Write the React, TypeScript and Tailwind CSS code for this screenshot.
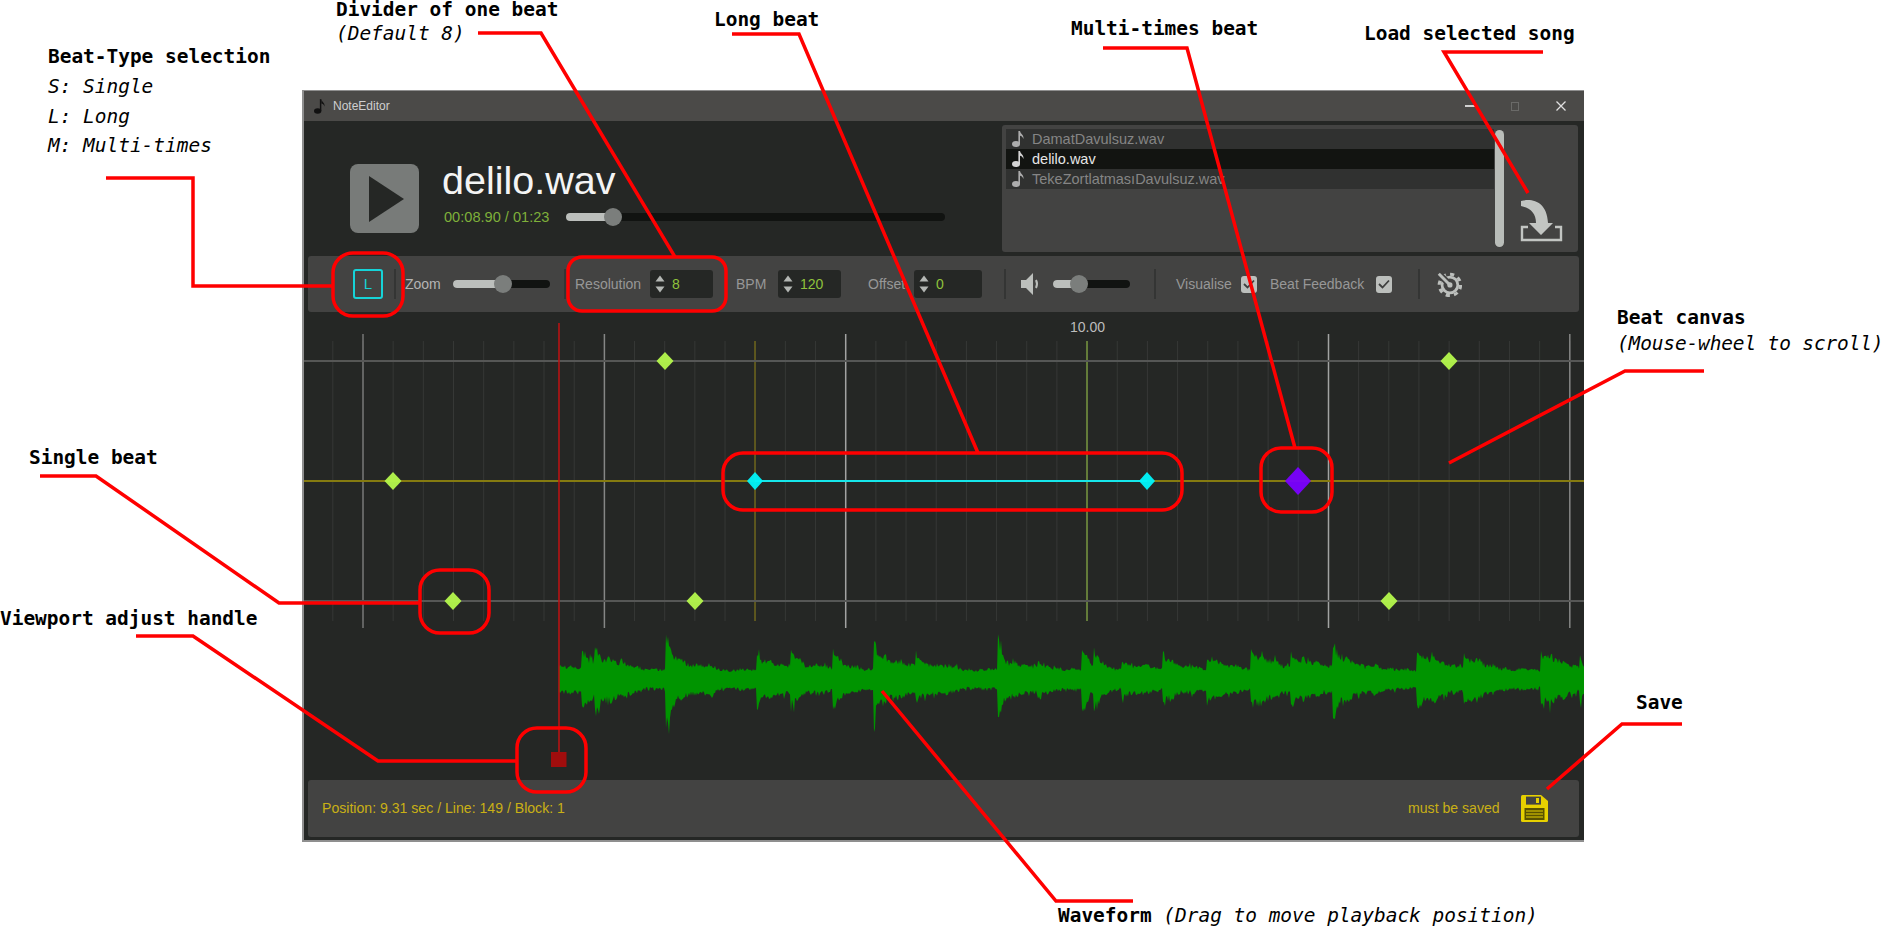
const GRID_STEP = 30.17;
const gridLines = Array.from({ length: 42 }, (_, i) => 363 + GRID_STEP * (i - 1));
const majorLines: [number, string][] = [
  [363, "#767776"],
  [604.4, "#858685"],
  [845.7, "#a2a3a2"],
  [1328.5, "#a2a3a2"],
  [1569.8, "#858685"],
];
const singleBeats: [number, number][] = [
  [393, 481],
  [665, 361],
  [453, 601],
  [695, 601],
  [1449, 361],
  [1389, 601],
];

// transient positions of the track: x, amplitude, decay
const peaks: [number, number, number][] = [
  [559, 17, 24], [582, 27, 30], [595, 33, 34], [666, 40, 20], [672, 27, 38], [757, 27, 36],
  [791, 26, 32], [833, 32, 16], [838, 20, 24], [874, 38, 16], [882, 26, 44], [916, 22, 40],
  [998, 40, 10], [1002, 24, 40], [1038, 17, 26], [1082, 36, 12], [1094, 38, 10], [1122, 19, 36],
  [1163, 27, 30], [1207, 26, 30], [1251, 32, 36], [1291, 27, 42], [1333, 40, 18], [1338, 26, 32],
  [1369, 15, 30], [1417, 28, 44], [1464, 26, 34], [1541, 32, 18], [1550, 24, 30], [1580, 26, 10],
];

function buildWave() {
  let seed = 1337;
  const rand = () => {
    seed = (seed * 16807) % 2147483647;
    return seed / 2147483647;
  };
  const top: string[] = [];
  const bottom: string[] = [];
  for (let x = 559; x <= 1584; x++) {
    let env = 6;
    for (const [p, amp, tau] of peaks) {
      if (x >= p) env = Math.max(env, amp * Math.exp(-(x - p) / tau));
    }
    // slow ripple so the quiet parts swell instead of lying flat
    env *= 1 + 0.12 * Math.sin(x / 6.5) + 0.08 * Math.sin(x / 2.3);
    if (env < 12) env += 3;
    const spikeA = rand() > 0.92 ? 1.18 : 1;
    const spikeB = rand() > 0.92 ? 1.22 : 1;
    const a = env * (0.72 + rand() * 0.32) * spikeA;
    const b = env * (0.76 + rand() * 0.36) * spikeB;
    top.push(`${x} ${(678 - a).toFixed(1)}`);
    bottom.unshift(`${x} ${(680 + b).toFixed(1)}`);
  }
  return `M${top.join("L")}L${bottom.join("L")}Z`;
}

const wavePath = buildWave();

function Diamond({ x, y, rx, ry, color }: { x: number; y: number; rx: number; ry: number; color: string }) {
  return <polygon points={`${x - rx},${y} ${x},${y - ry} ${x + rx},${y} ${x},${y + ry}`} fill={color} opacity={0.95} />;
}

function Note({ className }: { className: string }) {
  return (
    <svg viewBox="0 0 12 16" className={className} fill="currentColor">
      <ellipse cx="4" cy="13" rx="4" ry="3" />
      <rect x="6.4" y="0" width="1.6" height="13" />
      <path d="M8 0C8.5 3 12 3.5 11.5 8C10.8 6 9.5 5 8 4.8Z" />
    </svg>
  );
}

function Slider({ width, fill }: { width: string; fill: string }) {
  return (
    <div className={`h-[8px] rounded-full bg-[#111311] ${width}`}>
      <div className={`relative h-full rounded-full bg-[#bcbfbc] ${fill}`}>
        <div className="absolute right-0 top-1/2 h-[18px] w-[18px] -translate-y-1/2 translate-x-1/2 rounded-full bg-[#7b7e7c]" />
      </div>
    </div>
  );
}

function Separator({ className }: { className: string }) {
  return <div className={`h-[30px] w-[2px] bg-[#343534] ${className}`} />;
}

function Spinner({ value, width }: { value: string; width: string }) {
  return (
    <div className={`flex h-[28px] items-center rounded-[3px] bg-[#252725] pl-[5px] ${width}`}>
      <svg viewBox="0 0 10 18" className="h-[18px] w-[10px]" fill="#b4b7b4">
        <path d="M5 0.5L9.5 6.5H0.5Z" />
        <path d="M5 17.5L9.5 11.5H0.5Z" />
      </svg>
      <span className="ml-[7px] text-[14px] text-[#8fc23c]">{value}</span>
    </div>
  );
}

function Checkbox() {
  return (
    <div className="flex h-[17px] w-[16px] items-center justify-center rounded-[3px] bg-[#bcbfbc]">
      <svg viewBox="0 0 12 10" className="h-[10px] w-[12px]" fill="none" stroke="#3e3f3e" strokeWidth="1.8">
        <path d="M1 5L4.5 8.5L11 1.5" />
      </svg>
    </div>
  );
}

function Label({ className, children }: { className: string; children: React.ReactNode }) {
  return <div className={`absolute whitespace-pre font-['DejaVu_Sans_Mono',monospace] text-[19.45px] text-black ${className}`}>{children}</div>;
}

function Song({ name, active }: { name: string; active?: boolean }) {
  return (
    <div className={`flex h-[20px] items-center pl-[6px] ${active ? "bg-[#121411] text-[#e6e6e6]" : "bg-[#303130] text-[#858585]"}`}>
      <Note className={`h-[16px] w-[12px] ${active ? "text-[#d4d4d4]" : "text-[#adadad]"}`} />
      <span className="ml-[8px] text-[14.5px] leading-[20px]">{name}</span>
    </div>
  );
}

function Annotations() {
  return (
    <svg className="pointer-events-none absolute left-0 top-0" width="1884" height="928" fill="none" stroke="#ff0000" strokeWidth="3.5">
      <path d="M106 178H193V286H333" />
      <rect x="333" y="253" width="70" height="63" rx="20" />
      <path d="M478 33H541L675 257" />
      <rect x="568" y="257" width="158" height="54" rx="14" />
      <path d="M732 34H799L978 453" />
      <rect x="723" y="453" width="459" height="57" rx="20" />
      <path d="M1103 48H1187L1295 448" />
      <rect x="1261" y="448" width="71" height="64" rx="20" />
      <path d="M1543 52H1444L1528 193" />
      <path d="M1449 463L1625 371H1704" />
      <path d="M40 476H96L279 603H420" />
      <rect x="420" y="570" width="69" height="63" rx="20" />
      <path d="M136 636H193L378 761H517" />
      <rect x="517" y="728" width="69" height="64" rx="20" />
      <path d="M882 691L1056 901H1133" />
      <path d="M1547 789L1622 724H1682" />
    </svg>
  );
}

export default function App() {
  return (
    <div className="relative h-[928px] w-[1884px] overflow-hidden bg-white pl-[302px] pt-[90px] font-['Liberation_Sans',Arial,sans-serif]">
      <div className="flex h-[752px] w-[1282px] flex-col border-b-2 border-l-2 border-t border-[#8f8f8f] bg-[#252725]">
        {/* title bar */}
        <div className="flex h-[30px] shrink-0 items-center bg-[#4b4a48] pl-[10px]">
          <Note className="h-[15px] w-[11px] text-[#111111]" />
          <span className="ml-[8px] text-[12px] text-[#cfcfcf]">NoteEditor</span>
          <div className="ml-[1075px] h-[1.5px] w-[10px] bg-[#d0d0d0]" />
          <div className="ml-[36px] h-[9px] w-[8px] border border-[#6a6a68]" />
          <svg viewBox="0 0 10 10" className="ml-[37px] h-[10px] w-[10px]" stroke="#e0e0e0" strokeWidth="1.3">
            <path d="M0.5 0.5L9.5 9.5M9.5 0.5L0.5 9.5" />
          </svg>
        </div>

        {/* player + song list */}
        <div className="flex h-[135px] shrink-0">
          <div className="flex flex-1 pl-[46px] pt-[43px]">
            <div className="flex h-[69px] w-[69px] items-center justify-center rounded-[8px] bg-[#787b79]">
              <svg viewBox="0 0 35 46" className="ml-[3px] h-[46px] w-[35px]" fill="#252725">
                <path d="M0 0L35 23L0 46Z" />
              </svg>
            </div>
            <div className="ml-[24px] flex flex-col">
              <div className="-ml-[1px] mt-[-7px] h-[46px] text-[39.5px] leading-[46px] text-[#f4f4f4]">delilo.wav</div>
              <div className="ml-[1px] mt-[4px] flex items-center">
                <span className="w-[122px] text-[14.6px] leading-[20px] text-[#7fb03a]">00:08.90 / 01:23</span>
                <Slider width="w-[379px]" fill="w-[47px]" />
              </div>
            </div>
          </div>
          <div className="mr-[6px] mt-[4px] flex h-[127px] w-[576px] rounded-[3px] bg-[#434342] pl-[4px] pt-[4px]">
            <div className="h-[60px] w-[488px]">
              <Song name="DamatDavulsuz.wav" />
              <Song name="delilo.wav" active />
              <Song name="TekeZortlatmasıDavulsuz.wav" />
            </div>
            <div className="ml-[1px] mt-[1px] h-[117px] w-[9px] rounded-full bg-[#b9bdb9]" />
            <svg viewBox="0 0 43 43" className="mb-[10px] ml-[16px] h-[43px] w-[43px] self-end">
              <path d="M1 2C13 -1 27 3 28 24H33L21 36L9 24H16C16 14 10 9 1 7Z" fill="#c2c5c2" />
              <path d="M8 28H2V41H41V28H35" fill="none" stroke="#c2c5c2" strokeWidth="2.4" />
            </svg>
          </div>
        </div>

        {/* toolbar */}
        <div className="ml-[4px] mr-[5px] flex h-[56px] shrink-0 items-center rounded-[3px] bg-[#434342] text-[14px] text-[#979797]">
          <div className="ml-[45px] flex h-[30px] w-[30px] items-center justify-center rounded-[3px] border-2 border-[#16d3d8] text-[15px] text-[#16d3d8]">L</div>
          <Separator className="ml-[11px]" />
          <span className="ml-[9px] w-[48px] text-[#b4b4b4]">Zoom</span>
          <Slider width="w-[97px]" fill="w-[50px]" />
          <Separator className="ml-[14px]" />
          <span className="ml-[9px] w-[75px]">Resolution</span>
          <Spinner value="8" width="w-[63px]" />
          <span className="ml-[23px] w-[42px]">BPM</span>
          <Spinner value="120" width="w-[63px]" />
          <span className="ml-[27px] w-[46px]">Offset</span>
          <Spinner value="0" width="w-[68px]" />
          <Separator className="ml-[22px]" />
          <svg viewBox="0 0 20 22" className="ml-[15px] h-[22px] w-[20px]">
            <path d="M0 7H5L12 0V22L5 15H0Z" fill="#bcbfbc" />
            <path d="M15 7Q17 11 15 15" fill="none" stroke="#bcbfbc" strokeWidth="2" />
          </svg>
          <div className="ml-[12px]">
            <Slider width="w-[77px]" fill="w-[26px]" />
          </div>
          <Separator className="ml-[24px]" />
          <span className="ml-[20px] w-[65px]">Visualise</span>
          <Checkbox />
          <span className="ml-[13px] w-[106px]">Beat Feedback</span>
          <Checkbox />
          <Separator className="ml-[26px]" />
          <svg viewBox="0 0 28 28" className="ml-[16px] h-[26px] w-[26px]" fill="none">
            <circle cx="15" cy="15" r="11.5" stroke="#bcbfbc" strokeWidth="3.4" strokeDasharray="4.5 4.5" />
            <circle cx="15" cy="15" r="8.5" stroke="#bcbfbc" strokeWidth="3" />
            <path d="M3 3L13 13" stroke="#434342" strokeWidth="7" />
            <path d="M3 3L15 15" stroke="#bcbfbc" strokeWidth="3.2" />
            <circle cx="15" cy="15" r="2.8" fill="#bcbfbc" />
          </svg>
        </div>

        {/* beat canvas + waveform */}
        <div className="relative h-[468px] shrink-0 overflow-hidden">
          <svg viewBox="304 312 1280 468" className="block h-full w-full">
            {gridLines.map((x) => (
              <line key={x} x1={x} x2={x} y1={341} y2={621} stroke="#363836" strokeWidth="1" />
            ))}
            {majorLines.map(([x, color]) => (
              <line key={x} x1={x} x2={x} y1={334} y2={628} stroke={color} strokeWidth="1.5" />
            ))}
            <line x1={755} x2={755} y1={341} y2={621} stroke="#6d651a" strokeWidth="1.5" />
            <line x1={1087} x2={1087} y1={341} y2={621} stroke="#77963f" strokeWidth="1.5" />
            <line x1={304} x2={1584} y1={361} y2={361} stroke="#565756" strokeWidth="2" />
            <line x1={304} x2={1584} y1={601} y2={601} stroke="#565756" strokeWidth="2" />
            <line x1={304} x2={1584} y1={481} y2={481} stroke="#857b10" strokeWidth="2" />
            <line x1={755} x2={1147} y1={481} y2={481} stroke="#16e6ea" strokeWidth="2" />
            {singleBeats.map(([x, y]) => (
              <Diamond key={`${x}-${y}`} x={x} y={y} rx={8.5} ry={9} color="#b4f84c" />
            ))}
            <Diamond x={755} y={481} rx={8} ry={9} color="#00f4fa" />
            <Diamond x={1147} y={481} rx={8} ry={9} color="#00f4fa" />
            <Diamond x={1298} y={481} rx={13} ry={14} color="#7a00ff" />
            <path d={wavePath} fill="#009400" />
            <line x1={559} x2={559} y1={323} y2={752} stroke="#c01212" strokeWidth="1.5" />
            <rect x={551} y={752} width={15.5} height={15} fill="#a00d0d" />
          </svg>
          <span className="absolute left-[766px] top-[6px] w-[34px] text-center text-[14px] leading-[18px] text-[#bdbdbd]">10.00</span>
        </div>

        {/* status bar */}
        <div className="ml-[4px] mr-[5px] flex h-[57px] shrink-0 items-center rounded-[3px] bg-[#434342] pl-[14px] text-[14.1px] text-[#c9b015]">
          <span className="w-[1086px]">Position: 9.31 sec / Line: 149 / Block: 1</span>
          <span className="w-[113px]">must be saved</span>
          <svg viewBox="0 0 27 27" className="h-[27px] w-[27px]">
            <path d="M1.5 0H20L27 6V25.5Q27 27 25.5 27H1.5Q0 27 0 25.5V1.5Q0 0 1.5 0Z" fill="#e6d000" />
            <rect x="5" y="1.6" width="15" height="8" fill="#434342" />
            <rect x="15" y="3" width="3" height="5" fill="#e6d000" />
            <rect x="3.5" y="13" width="20" height="12" fill="#5a5200" />
            <path d="M5 16H22M5 19H22M5 22H22" stroke="#e6d000" strokeWidth="1.2" />
          </svg>
        </div>
      </div>

      <Annotations />

      <Label className="left-[48px] top-[45px] font-bold leading-[24px]">Beat-Type selection</Label>
      <Label className="left-[48px] top-[75px] italic leading-[24px]">S: Single</Label>
      <Label className="left-[48px] top-[105px] italic leading-[24px]">L: Long</Label>
      <Label className="left-[48px] top-[134px] italic leading-[24px]">M: Multi-times</Label>
      <Label className="left-[336px] top-[1px] font-bold leading-[18px]">Divider of one beat</Label>
      <Label className="left-[336px] top-[22px] italic leading-[24px]">(Default 8)</Label>
      <Label className="left-[714px] top-[8px] font-bold leading-[24px]">Long beat</Label>
      <Label className="left-[1071px] top-[17px] font-bold leading-[24px]">Multi-times beat</Label>
      <Label className="left-[1364px] top-[22px] font-bold leading-[24px]">Load selected song</Label>
      <Label className="left-[1617px] top-[306px] font-bold leading-[24px]">Beat canvas</Label>
      <Label className="left-[1617px] top-[332px] italic leading-[24px] tracking-[-0.12px]">(Mouse-wheel to scroll)</Label>
      <Label className="left-[29px] top-[446px] font-bold leading-[24px]">Single beat</Label>
      <Label className="left-0 top-[607px] font-bold leading-[24px]">Viewport adjust handle</Label>
      <Label className="left-[1636px] top-[691px] font-bold leading-[24px]">Save</Label>
      <Label className="left-[1058px] top-[904px] leading-[24px]">
        <span className="font-bold">Waveform</span> <span className="italic">(Drag to move playback position)</span>
      </Label>
    </div>
  );
}
